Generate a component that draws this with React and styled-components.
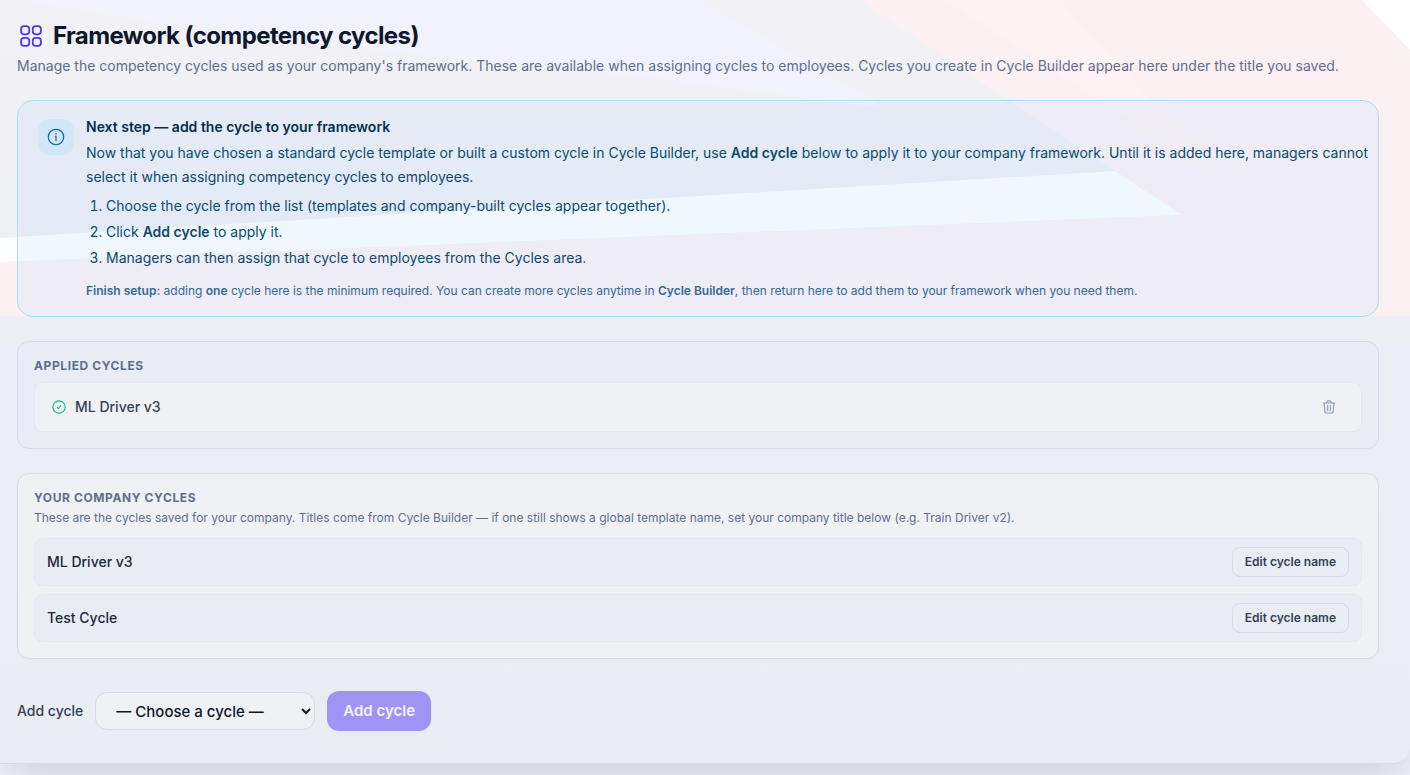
import React, { useState } from "react";
import styled, { createGlobalStyle } from "styled-components";

const GlobalStyle = createGlobalStyle`
  * {
    box-sizing: border-box;
  }
  body {
    margin: 0;
    background: #e9ecf2;
    font-family: Inter, "Liberation Sans", sans-serif;
    font-size: 14px;
    line-height: 20px;
    color: #0f172a;
  }
  h1, h2, p, ul, ol {
    margin: 0;
    padding: 0;
  }
  button, select {
    font-family: inherit;
  }
`;

const Page = styled.div`
  position: relative;
  min-height: 100vh;
  overflow: hidden;
  background: linear-gradient(#e8ebf2, #e9ecf3);
`;

const Panel = styled.main`
  position: relative;
  padding: 20px 31px 32px 17px;
  background: linear-gradient(#f1f1f6, #eeeff4 40%, #ebeef4 45%, #eaedf3 75%, #e9ecf2);
  border-bottom: 1px solid #d5daea;
  border-bottom-right-radius: 16px;
  box-shadow: 0 16px 32px -16px rgba(15, 23, 42, 0.18);
`;

const Backdrop = styled.svg`
  position: absolute;
  top: 0;
  left: 0;
  width: 100%;
  height: 316px;
`;

const Content = styled.div`
  position: relative;
  display: flex;
  flex-direction: column;
  gap: 24px;
`;

const Title = styled.h1`
  display: flex;
  align-items: center;
  gap: 8px;
  margin-bottom: 4px;
  font-size: 24px;
  line-height: 32px;
  font-weight: 700;
  letter-spacing: -0.025em;
  color: #0f172a;
`;

const Subtitle = styled.p`
  color: #606e8d;
`;

const Notice = styled.section`
  display: flex;
  align-items: flex-start;
  gap: 12px;
  padding: 16px 4px 16px 20px;
  border: 1px solid #afdcf7;
  border-radius: 16px;
  background: rgba(130, 200, 255, 0.1);
  color: #0c4a6e;
`;

const NoticeIcon = styled.span`
  display: flex;
  align-items: center;
  justify-content: center;
  flex: none;
  width: 36px;
  height: 36px;
  margin-top: 2px;
  border-radius: 12px;
  background: #d3e6f5;
  color: #0f6fab;
`;

const NoticeTitle = styled.h2`
  margin-bottom: 4px;
  font-size: 14px;
  line-height: 20px;
  font-weight: 600;
  color: #082f49;
`;

const NoticeText = styled.p`
  line-height: 24px;
`;

const Steps = styled.ol`
  display: flex;
  flex-direction: column;
  gap: 4px;
  margin-top: 6px;
  padding-left: 20px;
  line-height: 22px;
`;

const Hint = styled.p`
  margin-top: 12px;
  font-size: 12px;
  line-height: 19px;
  color: #356a92;
`;

const Strong = styled.strong`
  font-weight: 600;
`;

const Section = styled.section`
  padding: 16px;
  border: 1px solid #d5daea;
  border-radius: 12px;
  background: ${(props) => (props.$light ? "#f0f1f5" : "#e9ecf5")};
`;

const SectionTitle = styled.h2`
  font-size: 12px;
  line-height: 16px;
  font-weight: 700;
  letter-spacing: 0.05em;
  text-transform: uppercase;
  color: #606e8d;
`;

const SectionText = styled.p`
  margin-top: 4px;
  font-size: 12px;
  line-height: 16px;
  color: #606e8d;
`;

const List = styled.ul`
  display: flex;
  flex-direction: column;
  gap: 8px;
  margin-top: ${(props) => (props.$spaced ? 12 : 8)}px;
  list-style: none;
`;

const Row = styled.li`
  display: flex;
  align-items: center;
  justify-content: space-between;
  padding: 8px ${(props) => (props.$light ? 16 : 12)}px;
  border: 1px solid #e3e7f0;
  border-radius: 8px;
  background: ${(props) => (props.$light ? "#f0f1f5" : "#e9ecf4")};
  font-weight: 500;
  color: ${(props) => (props.$light ? "#334155" : "#1e293b")};
`;

const RowName = styled.span`
  display: flex;
  align-items: center;
  gap: 8px;
`;

const IconButton = styled.button`
  display: flex;
  padding: 8px;
  border: 0;
  border-radius: 8px;
  background: none;
  color: #8b9cbd;
  cursor: pointer;
`;

const EditButton = styled.button`
  padding: 6px 12px;
  border: 1px solid #d5daea;
  border-radius: 8px;
  background: #e9ecf2;
  font-size: 12px;
  line-height: 16px;
  font-weight: 600;
  color: #334155;
  cursor: pointer;
`;

const AddForm = styled.form`
  display: flex;
  align-items: center;
  gap: 12px;
  margin-top: 8px;
`;

const Label = styled.label`
  font-weight: 500;
  color: #334155;
`;

const Select = styled.select`
  width: 220px;
  height: 38px;
  padding: 0 0 0 16px;
  border: 1px solid #d5daea;
  border-radius: 12px;
  background: #f0f1f5;
  font-size: 15px;
  font-weight: 500;
  color: #0f172a;
`;

const AddButton = styled.button`
  height: 40px;
  padding: 0 16px;
  border: 0;
  border-radius: 12px;
  background: #a093f6;
  font-size: 15px;
  line-height: 24px;
  font-weight: 600;
  color: #f4f3fe;
`;

const StrokeIcon = ({ size, color = "currentColor", width = 1.5, children }) => (
  <svg
    width={size}
    height={size}
    viewBox="0 0 24 24"
    fill="none"
    stroke={color}
    strokeWidth={width}
    strokeLinecap="round"
    strokeLinejoin="round"
    aria-hidden="true"
  >
    {children}
  </svg>
);

const GridIcon = () => (
  <StrokeIcon size={28} color="#4f35e8">
    <rect x="3.5" y="3.5" width="7" height="7" rx="2.5" />
    <rect x="13.5" y="3.5" width="7" height="7" rx="2.5" />
    <rect x="3.5" y="13.5" width="7" height="7" rx="2.5" />
    <rect x="13.5" y="13.5" width="7" height="7" rx="2.5" />
  </StrokeIcon>
);

const InfoIcon = () => (
  <StrokeIcon size={20}>
    <circle cx="12" cy="12" r="9.25" />
    <path d="M11.25 11h.75v5.25M12 7.75v.25" />
  </StrokeIcon>
);

const CheckIcon = () => (
  <StrokeIcon size={16} color="#1dba86" width={1.75}>
    <circle cx="12" cy="12" r="9.25" />
    <path d="M9.25 12.5 11.25 14.25 14.75 9.75" />
  </StrokeIcon>
);

const TrashIcon = () => (
  <StrokeIcon size={16} width={1.75}>
    <path d="M3.5 6h17M8.500 5.500c.2-1.700 1-2.700 2.200-2.700h2.600c1.200 0 2 1 2.200 2.700M4.750 6.500l.9 12a2.500 2.500 0 0 0 2.500 2.500h7.700a2.500 2.500 0 0 0 2.500-2.500l.9-12M10 9.500v8M14 9.500v8" />
  </StrokeIcon>
);

const applied = ["ML Driver v3"];
const companyCycles = ["ML Driver v3", "Test Cycle"];

export default function App() {
  const [cycle, setCycle] = useState("");

  return (
    <Page>
      <GlobalStyle />
      <Panel>
        <Backdrop viewBox="0 0 1410 316" preserveAspectRatio="none" aria-hidden="true">
          <polygon points="20,0 698,0 885,108 640,76 250,38" fill="#f2f2ff" />
          <polygon points="860,0 1410,0 1410,316 0,316 0,262 1182,215 1115,171" fill="#fbf1f3" />
          <polygon points="945,0 1060,0 1222,179" fill="#fef2f4" />
          <polygon points="1362,0 1410,0 1410,50" fill="#fff" />
          <polygon points="0,238 1115,171 1182,215 0,262" fill="#fdfeff" />
        </Backdrop>
        <Content>
          <header>
            <Title>
              <GridIcon />
              Framework (competency cycles)
            </Title>
            <Subtitle>
              Manage the competency cycles used as your company's framework. These are available when
              assigning cycles to employees. Cycles you create in Cycle Builder appear here under the
              title you saved.
            </Subtitle>
          </header>

          <Notice>
            <NoticeIcon>
              <InfoIcon />
            </NoticeIcon>
            <div>
              <NoticeTitle>Next step — add the cycle to your framework</NoticeTitle>
              <NoticeText>
                Now that you have chosen a standard cycle template or built a custom cycle in Cycle
                Builder, use <Strong>Add cycle</Strong> below to apply it to your company framework.
                Until it is added here, managers cannot select it when assigning competency cycles to
                employees.
              </NoticeText>
              <Steps>
                <li>Choose the cycle from the list (templates and company-built cycles appear together).</li>
                <li>
                  Click <Strong>Add cycle</Strong> to apply it.
                </li>
                <li>Managers can then assign that cycle to employees from the Cycles area.</li>
              </Steps>
              <Hint>
                <Strong>Finish setup:</Strong> adding <Strong>one</Strong> cycle here is the minimum
                required. You can create more cycles anytime in <Strong>Cycle Builder</Strong>, then
                return here to add them to your framework when you need them.
              </Hint>
            </div>
          </Notice>

          <Section>
            <SectionTitle>Applied cycles</SectionTitle>
            <List>
              {applied.map((name) => (
                <Row key={name} $light>
                  <RowName>
                    <CheckIcon />
                    {name}
                  </RowName>
                  <IconButton type="button" aria-label={`Remove ${name}`}>
                    <TrashIcon />
                  </IconButton>
                </Row>
              ))}
            </List>
          </Section>

          <Section $light>
            <SectionTitle>Your company cycles</SectionTitle>
            <SectionText>
              These are the cycles saved for your company. Titles come from Cycle Builder — if one
              still shows a global template name, set your company title below (e.g. Train Driver v2).
            </SectionText>
            <List $spaced>
              {companyCycles.map((name) => (
                <Row key={name}>
                  {name}
                  <EditButton type="button">Edit cycle name</EditButton>
                </Row>
              ))}
            </List>
          </Section>

          <AddForm onSubmit={(e) => e.preventDefault()}>
            <Label htmlFor="cycle">Add cycle</Label>
            <Select id="cycle" value={cycle} onChange={(e) => setCycle(e.target.value)}>
              <option value="">— Choose a cycle —</option>
              {companyCycles.map((name) => (
                <option key={name} value={name}>
                  {name}
                </option>
              ))}
            </Select>
            <AddButton type="submit" disabled={!cycle}>
              Add cycle
            </AddButton>
          </AddForm>
        </Content>
      </Panel>
    </Page>
  );
}
